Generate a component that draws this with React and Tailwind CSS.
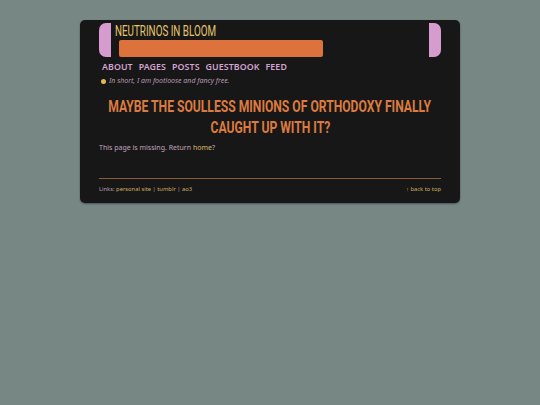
export default function App() {
  const cond = { fontFamily: '"Roboto", "Liberation Sans", sans-serif' };
  const body = { fontFamily: '"Noto Sans", "Open Sans", sans-serif' };
  return (
    <div className="min-h-[405px] w-[540px] bg-[#778884] pt-[20px]" style={body}>
      <div className="mx-auto w-[380px] rounded-[5px] bg-[#171717] px-[19px] pt-[3px] pb-[10px] shadow-[0_1px_2px_rgba(0,0,0,0.4)]">
        <div className="flex justify-between">
          <div className="flex gap-[4px]">
            <div className="h-[34px] w-[12px] rounded-l-[7px] bg-[#d69ccf]" />
            <div className="flex flex-col">
              <div className="flex h-[17px] items-center overflow-visible whitespace-nowrap">
                <span className="inline-block origin-left scale-x-[0.635] text-[15.5px] leading-[17px] text-[#e6c46c]" style={cond}>NEUTRINOS IN BLOOM</span>
              </div>
              <div className="ml-[4px] h-[17px] w-[204px] rounded-[2px] bg-[#dd723c]" />
            </div>
          </div>
          <div className="h-[34px] w-[12px] rounded-r-[7px] bg-[#d69ccf]" />
        </div>
        <nav className="mt-[4px] flex gap-[6px] pl-[3px] text-[8.8px] font-semibold leading-[12px] tracking-[0.1px] text-[#d6a4d2]">
          <span>ABOUT</span><span>PAGES</span><span>POSTS</span><span>GUESTBOOK</span><span>FEED</span>
        </nav>
        <div className="mt-[3px] flex items-center gap-[3px] pl-[2px] text-[7px] italic leading-[10px] text-[#b69bb2]">
          <span className="inline-block h-[5px] w-[5px] rounded-full bg-[#e2b94e]" />
          <span>In short, I am footloose and fancy free.</span>
        </div>
        <h1 className="mt-[10px] flex flex-col items-center text-[16.5px] font-bold leading-[21px] text-[#dc7b40]" style={cond}>
          <span className="flex w-full justify-center whitespace-nowrap"><span className="inline-block scale-x-[0.735]">MAYBE THE SOULLESS MINIONS OF ORTHODOXY FINALLY</span></span>
          <span className="flex w-full justify-center whitespace-nowrap"><span className="inline-block scale-x-[0.735]">CAUGHT UP WITH IT?</span></span>
        </h1>
        <p className="mt-[5px] text-[7px] leading-[10px] text-[#c2a3bd]">
          This page is missing. Return <span className="text-[#d9bc6c]">home</span>?
        </p>
        <div className="mt-[25px] h-[1px] bg-[#8a5a3c]" />
        <div className="mt-[6px] flex justify-between text-[5.8px] leading-[8px]">
          <span className="text-[#b89fb4]">Links: <span className="text-[#cfae64]">personal site</span> | <span className="text-[#cfae64]">tumblr</span> | <span className="text-[#cfae64]">ao3</span></span>
          <span className="text-[#cfae64]">↑ back to top</span>
        </div>
      </div>
    </div>
  );
}
